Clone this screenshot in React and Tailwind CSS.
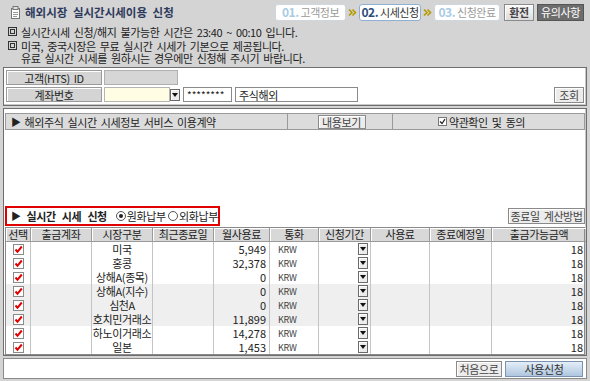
import React from 'react';

const FONT = { fontFamily: '"Noto Sans CJK KR", "Noto Sans", sans-serif' };

const COLS = 'grid grid-cols-[25px_61px_61px_61px_56px_49px_52px_59px_62px_94px]';

const rows = [
  { market: '미국', fee: '5,949' },
  { market: '홍콩', fee: '32,378' },
  { market: '상해A(종목)', fee: '0' },
  { market: '상해A(지수)', fee: '0', shade: true },
  { market: '심천A', fee: '0', shade: true },
  { market: '호치민거래소', fee: '11,899', shade: true },
  { market: '하노이거래소', fee: '14,278' },
  { market: '일본', fee: '1,453' },
];

const headers = ['선택', '출금계좌', '시장구분', '최근종료일', '월사용료', '통화', '신청기간', '사용료', '종료예정일', '출금가능금액'];

const Bullet = () => (
  <span className="inline-flex w-[9px] h-[9px] border border-[#333] items-center justify-center mr-[4px] shrink-0">
    <span className="w-[5px] h-[5px] border border-[#333]" />
  </span>
);

const Chevrons = () => (
  <svg width="9" height="9" viewBox="0 0 9 9" className="shrink-0 mx-[2px]">
    <path d="M1 1.5 L4 4.5 L1 7.5" fill="none" stroke="#b59a00" strokeWidth="1.6" />
    <path d="M4.5 1.5 L7.5 4.5 L4.5 7.5" fill="none" stroke="#b59a00" strokeWidth="1.6" />
  </svg>
);

const Step = ({ num, label, active, className = '' }) => (
  <div
    className={
      'h-[17px] flex items-center justify-center gap-[2px] rounded-[3px] bg-white border ' +
      (active ? 'border-[#8fb0d4] ' : 'border-[#d0d6de] ') +
      className
    }
  >
    <span className={'text-[12px] font-bold tracking-[-0.5px] ' + (active ? 'text-[#2d4d7e]' : 'text-[#a9cbe6]')}>{num}</span>
    <span className={'text-[11px] tracking-[-0.5px] ' + (active ? 'text-[#333]' : 'text-[#9a9a9a]')}>{label}</span>
  </div>
);

const Btn = ({ children, className = '' }) => (
  <div
    className={
      'flex items-center justify-center whitespace-nowrap bg-[#ececec] border border-[#8a8a8a] shadow-[inset_1px_1px_0_#ffffff] text-[11px] text-[#444] ' +
      className
    }
  >
    {children}
  </div>
);

const Radio = ({ on }) => (
  <span className="inline-flex shrink-0 w-[10px] h-[10px] rounded-full border border-[#555] bg-white items-center justify-center mr-[1px]">
    {on && <span className="w-[4px] h-[4px] rounded-full bg-[#222]" />}
  </span>
);

const RedCheck = () => (
  <span className="w-[11px] h-[11px] border border-[#8a8a8a] bg-white flex items-center justify-center">
    <svg width="9" height="9" viewBox="0 0 9 9">
      <path d="M1.5 4.5 L3.5 6.8 L7.8 1.5" fill="none" stroke="#e00000" strokeWidth="2" />
    </svg>
  </span>
);

const DropBtn = () => (
  <span className="w-[10px] h-[12px] bg-[#ececec] border border-[#6a6a6a] shadow-[inset_1px_1px_0_#fff] flex items-center justify-center">
    <svg width="6" height="4" viewBox="0 0 6 4">
      <path d="M0 0 H6 L3 4 Z" fill="#111" />
    </svg>
  </span>
);

export default function App() {
  return (
    <div style={FONT} className="w-[590px] h-[381px] bg-[#d4d4d4] overflow-hidden text-[11px] leading-[12px] text-[#222] tracking-[-0.4px] [word-spacing:2px] whitespace-nowrap">
      {/* header */}
      <div className="h-[24px] flex items-center pl-[10px] pr-[6px]">
        <svg width="11" height="13" viewBox="0 0 11 13" className="mr-[4px]">
          <rect x="1.5" y="2.5" width="8" height="10" fill="#fff" stroke="#777" />
          <rect x="3" y="0.5" width="5" height="3" fill="#ddd" stroke="#777" />
          <path d="M3 6.5 H8 M3 8.5 H8 M3 10.5 H7" stroke="#999" />
        </svg>
        <span className="font-bold text-[#2d3a5c] text-[11.5px] tracking-[0px] [word-spacing:3px]">해외시장 실시간시세이용 신청</span>
        <div className="ml-auto flex items-center [word-spacing:0px]">
          <Step num="01." label="고객정보" className="w-[71px]" />
          <Chevrons />
          <Step num="02." label="시세신청" active className="w-[62px]" />
          <Chevrons />
          <Step num="03." label="신청완료" className="w-[66px]" />
          <Btn className="w-[30px] h-[17px] ml-[4px] font-bold text-[#333] bg-gradient-to-b from-[#fafafa] to-[#dcdcdc]">환전</Btn>
          <div className="w-[47px] h-[17px] ml-[3px] flex items-center justify-center bg-[#6d6d6d] border border-[#555] text-white text-[11px]">유의사항</div>
        </div>
      </div>

      {/* notices */}
      <div className="pl-[8px] text-[#222]">
        <div className="mt-[1px] h-[13px] flex items-center"><Bullet />실시간시세 신청/해지 불가능한 시간은 23:40 ~ 00:10 입니다.</div>
        <div className="mt-[1px] h-[13px] flex items-center"><Bullet />미국, 중국시장은 무료 실시간 시세가 기본으로 제공됩니다.</div>
        <div className="h-[12px] flex items-center pl-[13px]">유료 실시간 시세를 원하시는 경우에만 신청해 주시기 바랍니다.</div>
      </div>

      {/* panel 1 */}
      <div className="mx-[3px] mt-[3px] h-[39px] bg-white border border-[#6e6e6e] shadow-[inset_-1px_-1px_0_#c8c8c8] px-[2px] py-[2px] flex flex-col gap-[2px]">
        <div className="h-[15px] flex gap-[2px]">
          <div className="w-[96px] bg-[#d4d4d4] border border-[#9a9a9a] shadow-[inset_1px_1px_0_#fff] flex items-center justify-center">고객(HTS) ID</div>
          <div className="w-[74px] bg-[#d6d6d6] border border-[#b0b0b0]" />
        </div>
        <div className="h-[15px] flex items-center">
          <div className="w-[96px] h-[15px] bg-[#d4d4d4] border border-[#9a9a9a] shadow-[inset_1px_1px_0_#fff] flex items-center justify-center">계좌번호</div>
          <div className="ml-[2px] w-[66px] h-[15px] bg-[#fffde3] border border-[#b5b5b5]" />
          <DropBtn />
          <div className="ml-[3px] w-[49px] h-[15px] border border-[#8a8a8a] flex items-center pl-[3px] text-[10px] tracking-[0px]">********</div>
          <div className="ml-[3px] w-[123px] h-[15px] border border-[#8a8a8a] flex items-center pl-[3px]">주식해외</div>
          <Btn className="ml-auto w-[30px] h-[16px]">조회</Btn>
        </div>
      </div>

      {/* panel 2 */}
      <div className="mx-[3px] mt-[2px] h-[248px] bg-white border border-[#6e6e6e] shadow-[inset_-1px_-1px_0_#c8c8c8] px-[1px] pt-[4px] flex flex-col">
        <div className="h-[17px] flex">
          <div className="w-[283px] bg-[#dcdcdc] border border-[#9a9a9a] flex items-center pl-[5px] gap-[4px]">
            <span className="text-[10px]">▶</span>해외주식 실시간 시세정보 서비스 이용계약
          </div>
          <div className="w-[105px] bg-[#dcdcdc] border-y border-r border-[#9a9a9a] flex items-center justify-center pl-[3px]">
            <Btn className="w-[48px] h-[14px]">내용보기</Btn>
          </div>
          <div className="flex-1 bg-[#dcdcdc] border-y border-r border-[#9a9a9a] flex items-center justify-center pr-[14px]">
            <span className="w-[9px] h-[9px] border border-[#777] bg-white flex items-center justify-center mr-[2px]">
              <svg width="7" height="7" viewBox="0 0 7 7"><path d="M1 3.5 L3 5.5 L6 1.2" fill="none" stroke="#222" strokeWidth="1.2" /></svg>
            </span>
            약관확인 및 동의
          </div>
        </div>

        <div className="mt-[76px] h-[20px] flex items-center">
          <div className="w-[215px] h-[20px] border-2 border-[#e00000] flex items-center pl-[4px]">
            <span className="text-[10px] mr-[6px]">▶</span>
            <span className="font-bold mr-[9px] [word-spacing:4px]">실시간 시세 신청</span>
            <Radio on />원화납부
            <span className="w-[3px]" />
            <Radio />외화납부
          </div>
          <Btn className="ml-auto w-[77px] h-[16px]">종료일 계산방법</Btn>
        </div>

        {/* table */}
        <div className="mt-[1px] w-[580px] border border-[#8a8a8a] leading-none">
          <div className={COLS + ' h-[14px] bg-[#d8d8d8]'}>
            {headers.map((h, i) => (
              <div key={h} className={'flex items-center justify-center border-b border-[#9a9a9a] shadow-[inset_1px_1px_0_#fff] ' + (i < 9 ? 'border-r' : '')}>
                {h}
              </div>
            ))}
          </div>
          {rows.map((r) => (
            <div key={r.market} className={COLS + ' h-[14px] ' + (r.shade ? 'bg-[#efefef]' : 'bg-white')}>
              <div className="border-r border-[#c4c4c4] flex items-center justify-center"><RedCheck /></div>
              <div className="border-r border-[#c4c4c4]" />
              <div className="border-r border-[#c4c4c4] flex items-center justify-center">{r.market}</div>
              <div className="border-r border-[#c4c4c4]" />
              <div className="border-r border-[#c4c4c4] flex items-center justify-end pr-[3px] tracking-[0px]">{r.fee}</div>
              <div className="border-r border-[#c4c4c4] flex items-center pl-[8px] text-[9px] tracking-[-0.3px] text-[#444]">KRW</div>
              <div className="border-r border-[#c4c4c4] flex items-center justify-end pr-[2px]"><DropBtn /></div>
              <div className="border-r border-[#c4c4c4]" />
              <div className="border-r border-[#c4c4c4]" />
              <div className="flex items-center justify-end pr-[3px] tracking-[0px]">18</div>
            </div>
          ))}
        </div>
      </div>

      {/* bottom bar */}
      <div className="mx-[3px] mt-[2px] h-[21px] bg-white border border-[#8a8a8a] flex items-center justify-end pr-[3px] gap-[3px]">
        <Btn className="w-[46px] h-[16px]">처음으로</Btn>
        <div className="w-[78px] h-[16px] flex items-center justify-center border border-[#7b93b0] bg-gradient-to-b from-[#e4eef8] to-[#afc6df] text-[#333] text-[11px]">사용신청</div>
      </div>
    </div>
  );
}
